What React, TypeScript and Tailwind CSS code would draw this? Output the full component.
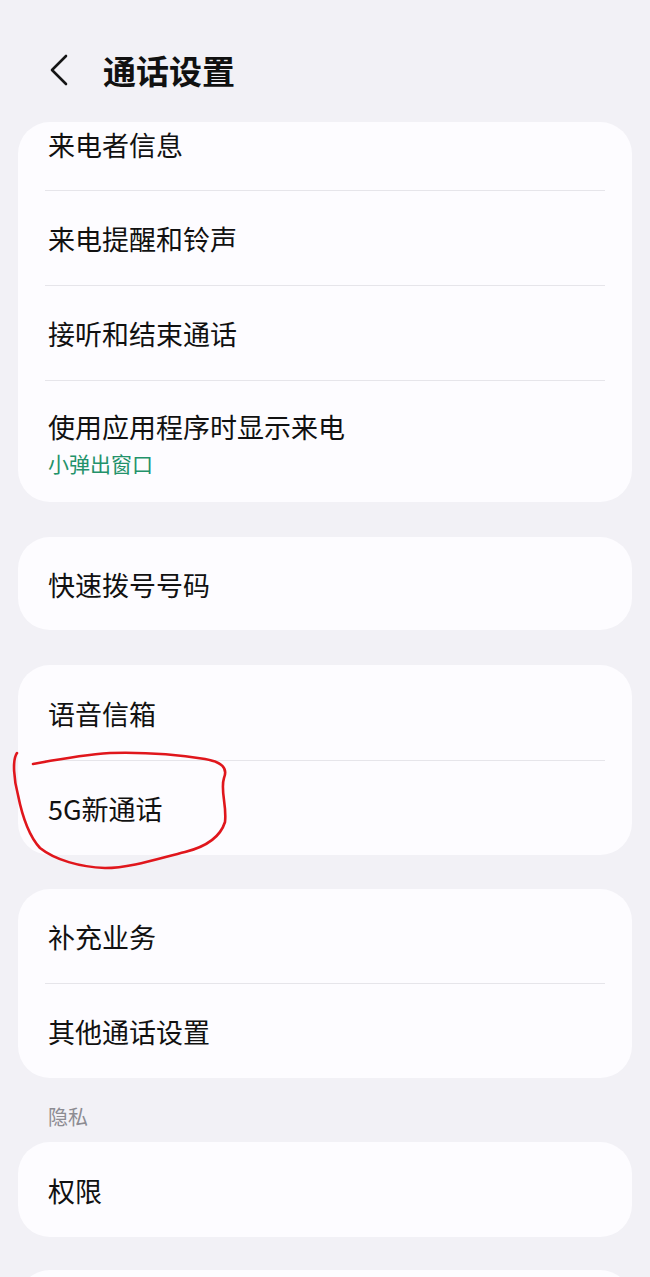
const font = "font-['Noto_Sans_CJK_SC','Noto_Sans',sans-serif]"

function Divider() {
  return <div className="mx-[27px] h-px bg-[#e6e5ea]" />
}

function Row({ label, h = 'h-[94px]' }: { label: string; h?: string }) {
  return (
    <div className={`flex ${h} items-center px-[30px] pt-[2px]`}>
      <span className="text-[27px] leading-[34px] text-[#111111]">{label}</span>
    </div>
  )
}

function Card({ children }: { children: React.ReactNode }) {
  return <div className="mx-[18px] overflow-hidden rounded-[32px] bg-[#fdfcff]">{children}</div>
}

export default function App() {
  return (
    <div className={`relative h-[1277px] w-[650px] overflow-hidden bg-[#f2f1f6] ${font}`}>
      <div className="h-[122px] pt-[50px]">
        <div className="flex h-[40px] items-center">
          <svg viewBox="0 0 20 32" width="20" height="32" className="ml-[49px]" fill="none" stroke="#151515" strokeWidth="2.6" strokeLinecap="round" strokeLinejoin="round">
            <path d="M17 2 L3 16 L17 30" />
          </svg>
          <h1 className="ml-[34px] text-[33px] font-bold leading-[40px] text-[#111111]">通话设置</h1>
        </div>
      </div>

      <Card>
        <div className="h-[68px] px-[30px] pt-[6px]">
          <span className="text-[27px] leading-[34px] text-[#111111]">来电者信息</span>
        </div>
        <Divider />
        <Row label="来电提醒和铃声" />
        <Divider />
        <Row label="接听和结束通话" />
        <Divider />
        <div className="px-[30px] pb-[25px] pt-[29px]">
          <div className="text-[27px] leading-[34px] text-[#111111]">使用应用程序时显示来电</div>
          <div className="mt-[5px] text-[21px] leading-[28px] text-[#23926a]">小弹出窗口</div>
        </div>
      </Card>

      <div className="h-[35px]" />
      <Card>
        <Row label="快速拨号号码" h="h-[93px]" />
      </Card>

      <div className="h-[35px]" />
      <Card>
        <Row label="语音信箱" h="h-[95px]" />
        <Divider />
        <Row label="5G新通话" />
      </Card>

      <div className="h-[34px]" />
      <Card>
        <Row label="补充业务" />
        <Divider />
        <Row label="其他通话设置" />
      </Card>

      <div className="px-[48px] pb-[13px] pt-[27px] text-[20px] leading-[24px] text-[#8d8c92]">隐私</div>
      <Card>
        <Row label="权限" h="h-[95px]" />
      </Card>

      <div className="h-[33px]" />
      <Card>
        <div className="h-[95px]" />
      </Card>

      {/* hand-drawn annotation around 5G新通话 */}
      <svg className="absolute left-0 top-[740px]" width="240" height="140" viewBox="0 0 240 140" fill="none" stroke="#e0161c" strokeWidth="2.6" strokeLinecap="round" strokeLinejoin="round">
        <path d="M17 13 C12 20 14 40 18 55 C22 75 28 95 40 108 C55 120 80 127 105 128 C130 128 160 118 185 112 C205 107 220 98 225 82 C227 65 220 50 224 38 C228 28 222 22 205 19 C180 15 145 12 110 13 C80 15 55 20 33 24" />
      </svg>
    </div>
  )
}
